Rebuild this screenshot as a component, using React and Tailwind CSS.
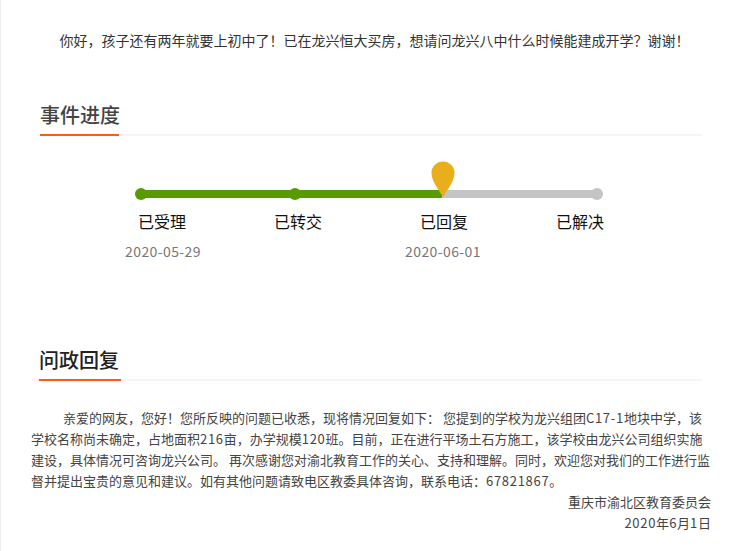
const font = { fontFamily: '"Noto Sans CJK SC", "Open Sans", sans-serif' };

function Heading({ children, barClass, textClass, wrapClass }) {
  return (
    <div className={`flex border-b-2 border-[#f5f5f5] ${wrapClass}`}>
      <div className={`-mb-[2px] whitespace-nowrap border-b-2 border-[#ff5a14] text-[20px] font-medium leading-[30px] ${barClass} ${textClass}`}>
        {children}
      </div>
    </div>
  );
}

function Step({ label, date, className, dateClass }) {
  return (
    <div className={`flex w-[100px] shrink-0 flex-col items-center ${className}`}>
      <div className="text-[16px] leading-[24px] text-[#111]">{label}</div>
      <div className={`mt-[6px] h-[24px] text-[14px] leading-[24px] tracking-[0.4px] text-[#777] ${dateClass}`}>{date}</div>
    </div>
  );
}

function N({ children }) {
  return <span className="tracking-[0.7px]">{children}</span>;
}

export default function App() {
  return (
    <div className="h-[551px] w-[740px] overflow-hidden border-l border-[#eeeeee] bg-white" style={font}>
      <p className="pl-[8px] pt-[30px] text-center text-[14px] leading-[21px] text-[#333]">
        你好，孩子还有两年就要上初中了！已在龙兴恒大买房，想请问龙兴八中什么时候能建成开学？谢谢！
      </p>

      <Heading wrapClass="ml-[39px] mr-[38px] mt-[49px]" barClass="w-[79px] pb-[4px]" textClass="text-[#444]">
        事件进度
      </Heading>

      <div className="relative ml-[134px] mt-[52px] flex h-[12px] w-[468px] items-center">
        <div className="h-[12px] w-[12px] shrink-0 rounded-full bg-[#589b00]" />
        <div className="-ml-[2px] h-[8px] w-[146px] bg-[#589b00]" />
        <div className="-mx-[2px] h-[12px] w-[12px] shrink-0 rounded-full bg-[#589b00]" />
        <div className="h-[8px] w-[143px] bg-[#589b00]" />
        <div className="h-[8px] flex-1 bg-[#c4c4c4]" />
        <div className="-ml-[2px] h-[12px] w-[12px] shrink-0 rounded-full bg-[#c4c4c4]" />
        <svg className="absolute left-[296px] top-[-27px]" width="24" height="37" viewBox="0 0 24 37">
          <path d="M12 36.5C9.5 30 .5 21.5.5 12a11.5 11.5 0 0 1 23 0C23.5 21.5 14.500 30 12 36.5Z" fill="#e9ae1c" />
        </svg>
      </div>

      <div className="ml-[111px] mt-[9px] flex">
        <Step label="已受理" date="2020-05-29" dateClass="pl-[2px]" />
        <Step label="已转交" className="ml-[36px]" />
        <Step label="已回复" date="2020-06-01" className="ml-[46px]" dateClass="pr-[2px]" />
        <Step label="已解决" className="ml-[36px]" />
      </div>

      <Heading wrapClass="ml-[31px] mr-[38px] mt-[82px]" barClass="ml-[7px] w-[82px] pb-[4px]" textClass="text-[#222]">
        问政回复
      </Heading>

      <div className="ml-[30px] mr-[29px] mt-[26px] text-[13px] leading-[21px] text-[#444]">
        <p className="indent-[32px]">
          亲爱的网友，您好！您所反映的问题已收悉，现将情况回复如下： 您提到的学校为龙兴组团<N>C17-1</N>地块中学，该学校名称尚未确定，占地面积<N>216</N>亩，办学规模<N>120</N>班。目前，正在进行平场土石方施工，该学校由龙兴公司组织实施建设，具体情况可咨询龙兴公司。 再次感谢您对渝北教育工作的关心、支持和理解。同时，欢迎您对我们的工作进行监督并提出宝贵的意见和建议。如有其他问题请致电区教委具体咨询，联系电话：<N>67821867</N>。
        </p>
        <p className="text-right">重庆市渝北区教育委员会</p>
        <p className="text-right"><N>2020</N>年<N>6</N>月<N>1</N>日</p>
      </div>
    </div>
  );
}
